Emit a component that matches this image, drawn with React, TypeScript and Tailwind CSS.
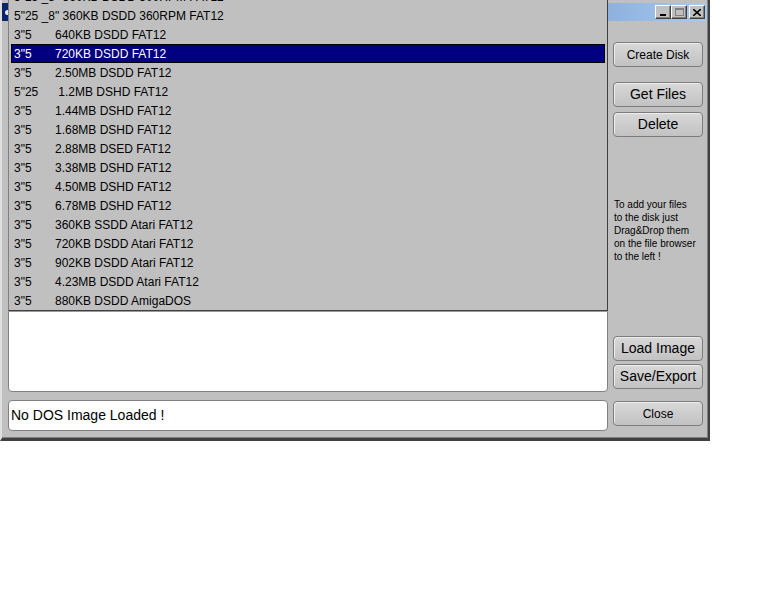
import React from "react";

const rows: { a: string; b?: string }[] = [
  { a: '5"25 _8" 360KB DSDD 300RPM FAT12' },
  { a: '5"25 _8" 360KB DSDD 360RPM FAT12' },
  { a: '3"5', b: "640KB DSDD FAT12" },
  { a: '3"5', b: "720KB DSDD FAT12" },
  { a: '3"5', b: "2.50MB DSDD FAT12" },
  { a: '5"25', b: " 1.2MB DSHD FAT12" },
  { a: '3"5', b: "1.44MB DSHD FAT12" },
  { a: '3"5', b: "1.68MB DSHD FAT12" },
  { a: '3"5', b: "2.88MB DSED FAT12" },
  { a: '3"5', b: "3.38MB DSHD FAT12" },
  { a: '3"5', b: "4.50MB DSHD FAT12" },
  { a: '3"5', b: "6.78MB DSHD FAT12" },
  { a: '3"5', b: "360KB SSDD Atari FAT12" },
  { a: '3"5', b: "720KB DSDD Atari FAT12" },
  { a: '3"5', b: "902KB DSDD Atari FAT12" },
  { a: '3"5', b: "4.23MB DSDD Atari FAT12" },
  { a: '3"5', b: "880KB DSDD AmigaDOS" },
];

function Btn({ label, small, className }: { label: string; small?: boolean; className?: string }) {
  return (
    <div
      className={
        "h-[25px] w-[90px] rounded-[4px] border border-[#7c7c7c] bg-gradient-to-b from-[#d8d8d8] to-[#c2c2c2] shadow-[inset_1px_1px_0_#eeeeee] flex items-center justify-center text-black " +
        (small ? "text-[12px] " : "text-[14px] ") +
        (className ?? "")
      }
    >
      {label}
    </div>
  );
}

function TitleBtn({ children }: { children: React.ReactNode }) {
  return (
    <div className="w-[16px] h-[14px] bg-[#c0c0c0] border border-t-white border-l-white border-r-[#404040] border-b-[#404040] shadow-[inset_-1px_-1px_0_#808080] flex items-center justify-center">
      {children}
    </div>
  );
}

export default function App() {
  return (
    <div className="relative w-[768px] h-[614px] bg-white font-['Liberation_Sans',Arial,sans-serif] overflow-hidden">
      {/* window */}
      <div className="w-[710px] h-[441px] bg-[#c0c0c0] border-l-2 border-l-[#dfdfdf] border-r-2 border-r-[#404040] border-b-[3px] border-b-[#404040] shadow-[inset_-1px_-1px_0_#808080] flex flex-col pt-[3px]">
        {/* title bar */}
        <div className="h-[18px] mr-[1px] bg-gradient-to-r from-[#0a246a] to-[#a6caf0] flex items-center">
          <span className="ml-[3px] w-[3px] h-[5px] rounded-l-full bg-[#e8e8f4]" />
          <div className="ml-auto mr-[2px] flex items-center">
            <TitleBtn>
              <span className="mt-[6px] w-[6px] h-[2px] bg-black" />
            </TitleBtn>
            <TitleBtn>
              <span className="w-[9px] h-[8px] border border-[#808080] border-t-2" />
            </TitleBtn>
            <div className="w-[2px]" />
            <TitleBtn>
              <svg width="8" height="7" viewBox="0 0 8 7">
                <path d="M0 0 L8 7 M8 0 L0 7" stroke="black" strokeWidth="1.6" />
              </svg>
            </TitleBtn>
          </div>
        </div>
        {/* body */}
        <div className="flex pl-[6px]">
          <div className="w-[600px] flex flex-col">
            <div className="mt-[3px] h-[368px] bg-white border border-[#808080] rounded-[4px]" />
            <div className="mt-[8px] h-[31px] bg-white border border-[#808080] rounded-[4px] flex items-center pl-[2px] text-[14px] text-black">
              No DOS Image Loaded !
            </div>
          </div>
          <div className="ml-[5px] w-[90px] flex flex-col">
            <Btn label="Create Disk" small className="mt-[21px]" />
            <Btn label="Get Files" className="mt-[15px]" />
            <Btn label="Delete" className="mt-[5px]" />
            <div className="mt-[61px] pl-[1px] text-[10px] leading-[13px] text-black">
              <div>To add your files</div>
              <div>to the disk just</div>
              <div>Drag&amp;Drop them</div>
              <div>on the file browser</div>
              <div>to the left !</div>
            </div>
            <Btn label="Load Image" className="mt-[73px]" />
            <Btn label="Save/Export" className="mt-[3px]" />
            <Btn label="Close" small className="mt-[12px]" />
          </div>
        </div>
      </div>

      {/* dropdown list overlay */}
      <div className="absolute left-[8px] top-[-14px] w-[600px] bg-[#c0c0c0] border border-l-[#808080] border-t-[#808080] border-r-[#404040] border-b-[#404040] shadow-[0_1px_0_#9a9a9a] px-[2px]">
        {rows.map((r, i) => {
          const sel = i === 3;
          return (
            <div
              key={i}
              className={
                "h-[19px] flex items-center pl-[3px] text-[12px] whitespace-pre " +
                (sel ? "bg-[#000080] text-white outline outline-1 outline-black -outline-offset-1" : "text-black")
              }
            >
              {r.b === undefined ? (
                <span>{r.a}</span>
              ) : (
                <>
                  <span className="w-[41px]">{r.a}</span>
                  <span>{r.b}</span>
                </>
              )}
            </div>
          );
        })}
      </div>
    </div>
  );
}
